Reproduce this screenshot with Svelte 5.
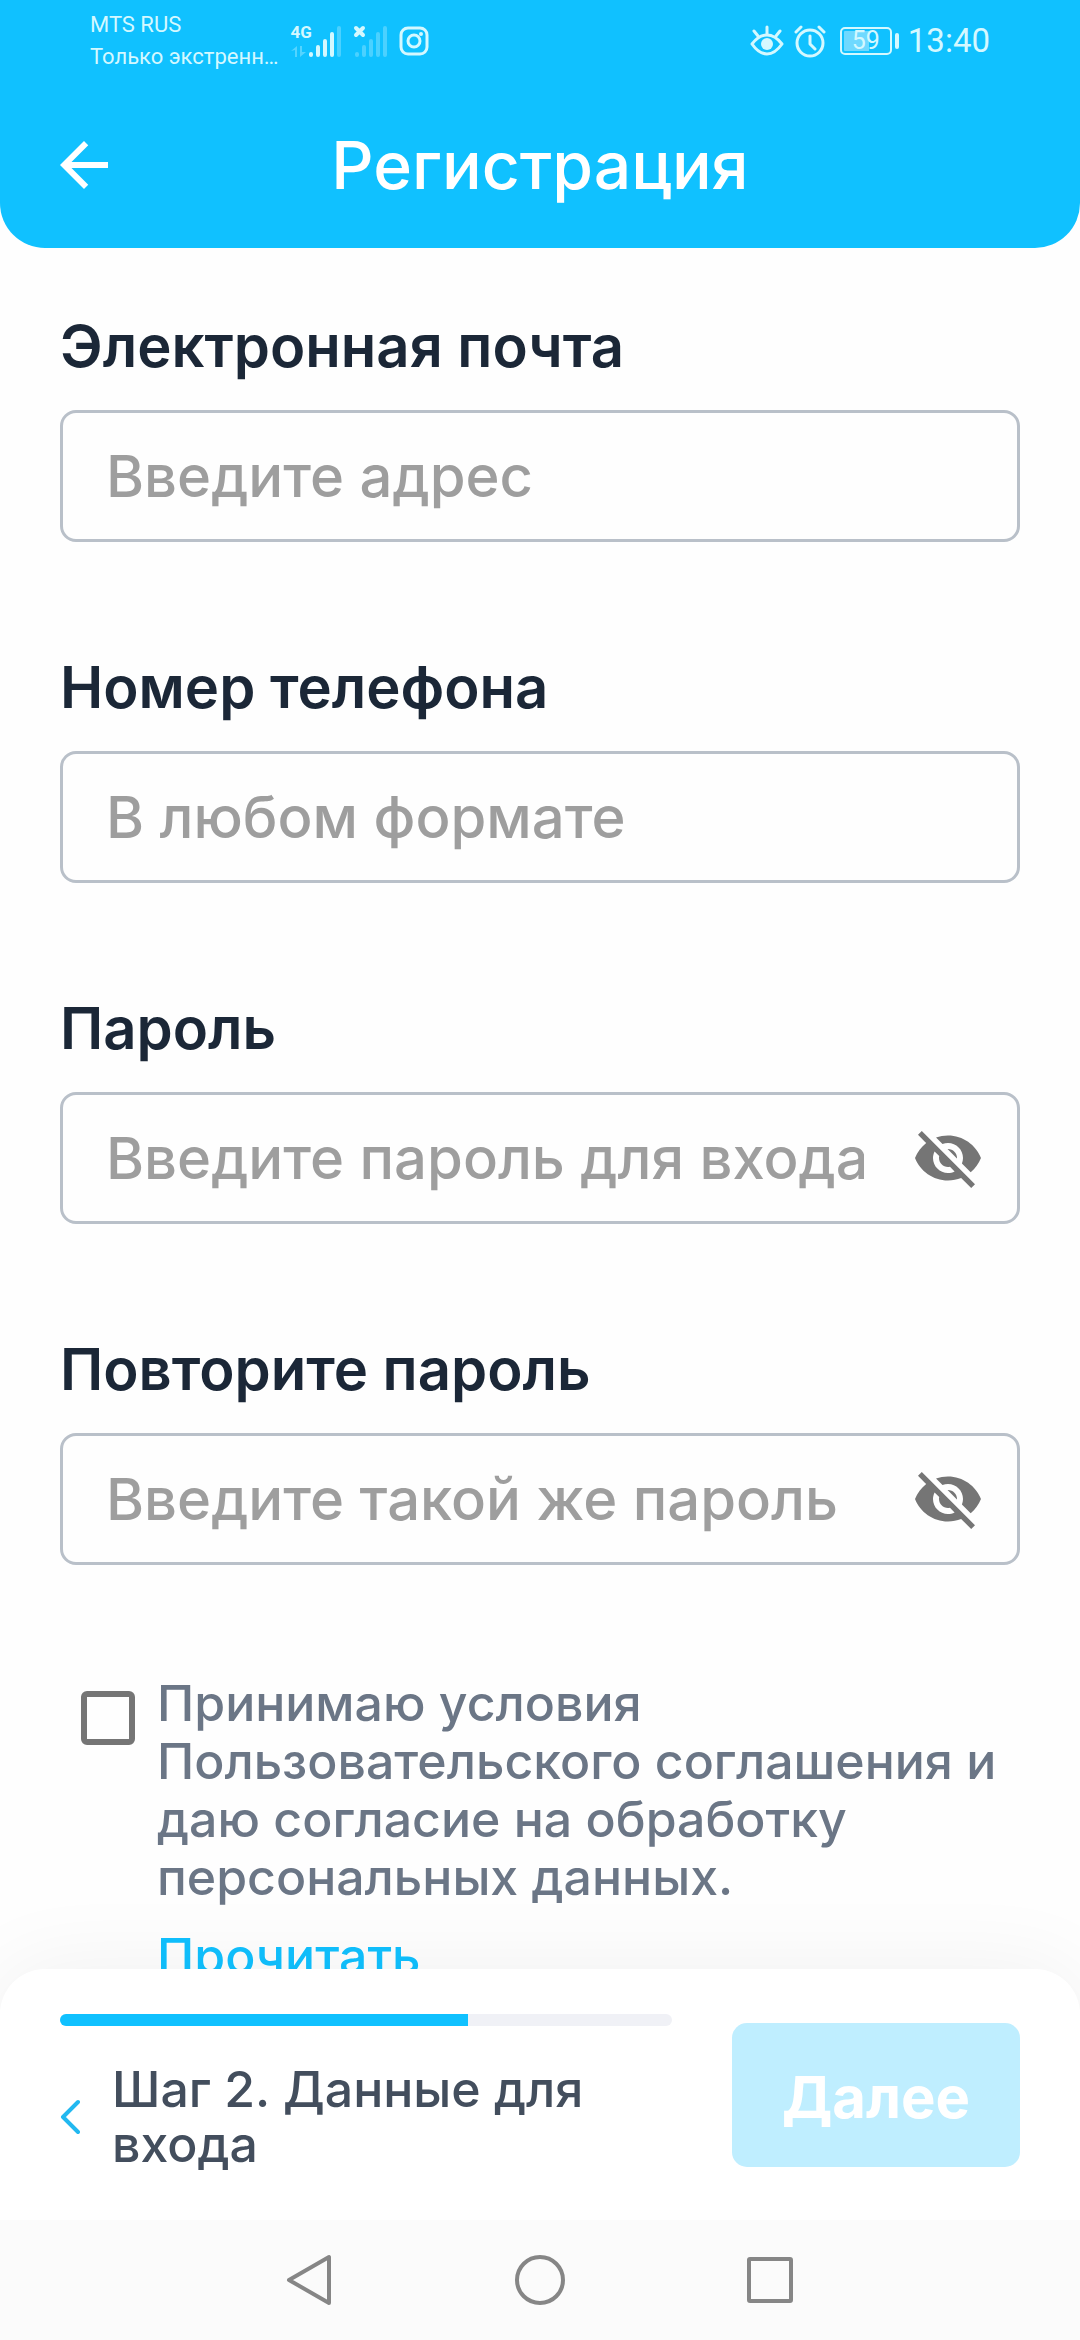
<script lang="ts">
  type Field = {
    id: string;
    label: string;
    placeholder: string;
    type: "email" | "tel" | "password";
  };

  const fields: Field[] = [
    { id: "email", label: "Электронная почта", placeholder: "Введите адрес", type: "email" },
    { id: "phone", label: "Номер телефона", placeholder: "В любом формате", type: "tel" },
    { id: "password", label: "Пароль", placeholder: "Введите пароль для входа", type: "password" },
    { id: "repeat", label: "Повторите пароль", placeholder: "Введите такой же пароль", type: "password" },
  ];

  let values = $state<Record<string, string>>({ email: "", phone: "", password: "", repeat: "" });
  let visible = $state<Record<string, boolean>>({});
  let accepted = $state(false);

  const step = 2;
  const stepCount = 3;
  const progress = (step / stepCount) * 100;

  const complete = $derived(accepted && fields.every((field) => values[field.id] !== ""));
</script>

<div class="screen">
  <header class="header">
    <div class="status">
      <div class="carrier">
        <span>MTS RUS</span>
        <span>Только экстренн…</span>
      </div>
      <div class="signals">
        <div class="network">
          <span class="generation">4G</span>
          <svg width="52" height="34" viewBox="0 0 52 34" fill="none" stroke="currentColor" stroke-width="4" stroke-linecap="round" aria-hidden="true">
            <path d="M0 27l6-5v11H4v-7zM9 22v11l6-5h-4v-6z" fill="currentColor" stroke="none" opacity="0.35" />
            <path d="M20 30v1M27 23v8M34 17v14M41 10v21" />
            <path d="M48 4v27" opacity="0.3" />
          </svg>
        </div>
        <svg width="36" height="34" viewBox="0 0 36 34" fill="none" stroke="currentColor" stroke-width="4" stroke-linecap="round" aria-hidden="true">
          <path d="M4 30v1M11 23v8M18 17v14M25 10v21M32 4v27" opacity="0.3" />
          <path d="M3 4l7 7M10 4l-7 7" />
        </svg>
        <svg width="30" height="30" viewBox="0 0 30 30" fill="none" stroke="currentColor" stroke-width="3" aria-hidden="true">
          <rect x="2" y="2" width="26" height="26" rx="7" />
          <circle cx="15" cy="15" r="6" />
          <circle cx="22" cy="8" r="2" fill="currentColor" stroke="none" />
        </svg>
      </div>
      <div class="system">
        <svg width="34" height="34" viewBox="0 0 34 34" fill="none" stroke="currentColor" stroke-width="3" stroke-linecap="round" stroke-linejoin="round" aria-hidden="true">
          <path d="M2 20Q9 11 17 11t15 9q-7 10-15 10T2 20z" />
          <path d="M17 10V3M8 12L4 7M26 12l4-5" />
          <circle cx="17" cy="20" r="6" fill="currentColor" stroke="none" />
        </svg>
        <svg width="32" height="34" viewBox="0 0 32 34" fill="none" stroke="currentColor" stroke-width="3" stroke-linecap="round" stroke-linejoin="round" aria-hidden="true">
          <circle cx="16" cy="19" r="13" />
          <path d="M16 12v8l5 5M2 8l5-5M30 8l-5-5" />
        </svg>
        <div class="battery"><span>59</span></div>
        <span class="clock">13:40</span>
      </div>
    </div>
    <div class="titlebar">
      <button class="icon-button" type="button" aria-label="Назад">
        <svg width="72" height="72" viewBox="0 0 24 24" fill="currentColor" aria-hidden="true">
          <path d="M20 11H7.83l5.59-5.59L12 4l-8 8 8 8 1.41-1.41L7.83 13H20v-2z" />
        </svg>
      </button>
      <h1>Регистрация</h1>
    </div>
  </header>

  <main class="content">
    {#each fields as field (field.id)}
      <div class="field">
        <label for={field.id}>{field.label}</label>
        <div class="control">
          <input
            id={field.id}
            type={field.type === "password" && visible[field.id] ? "text" : field.type}
            placeholder={field.placeholder}
            bind:value={values[field.id]}
          />
          {#if field.type === "password"}
            <button
              class="icon-button eye"
              type="button"
              aria-label="Показать пароль"
              aria-pressed={!!visible[field.id]}
              onclick={() => (visible[field.id] = !visible[field.id])}
            >
              <svg width="72" height="72" viewBox="0 0 24 24" fill="currentColor" aria-hidden="true">
                <path d="M12 7c2.76 0 5 2.24 5 5 0 .65-.13 1.26-.36 1.83l2.92 2.92c1.51-1.26 2.7-2.89 3.43-4.75-1.73-4.39-6-7.5-11-7.5-1.4 0-2.74.25-3.98.7l2.16 2.16C10.74 7.13 11.35 7 12 7zM2 4.27l2.28 2.28.46.46C3.08 8.3 1.78 10.02 1 12c1.73 4.39 6 7.5 11 7.5 1.55 0 3.03-.3 4.38-.84l.42.42L19.73 22 21 20.73 3.27 3 2 4.27zM7.53 9.8l1.55 1.55c-.05.21-.08.43-.08.65 0 1.66 1.34 3 3 3 .22 0 .44-.03.65-.08l1.55 1.55c-.67.33-1.41.53-2.2.53-2.76 0-5-2.24-5-5 0-.79.2-1.53.53-2.2zm4.31-.78l3.15 3.15.02-.16c0-1.66-1.34-3-3-3l-.17.01z" />
              </svg>
            </button>
          {/if}
        </div>
      </div>
    {/each}

    <div class="consent">
      <input id="consent" type="checkbox" bind:checked={accepted} />
      <div class="terms">
        <label for="consent">Принимаю условия Пользовательского соглашения и даю согласие на обработку персональных данных.</label>
        <a href="#terms">Прочитать</a>
      </div>
    </div>
  </main>

  <footer class="panel">
    <div class="progress">
      <div class="track" role="progressbar" aria-label="Шаг" aria-valuenow={step} aria-valuemin={0} aria-valuemax={stepCount}>
        <div class="bar" style={`width: ${progress}%`}></div>
      </div>
      <button class="step" type="button">
        <svg width="20" height="36" viewBox="0 0 20 36" fill="none" stroke="currentColor" stroke-width="4" stroke-linecap="round" stroke-linejoin="round" aria-hidden="true">
          <path d="M18 3L3 18l15 15" />
        </svg>
        <span>Шаг 2. Данные для входа</span>
      </button>
    </div>
    <button class="next" type="button" disabled={!complete}>Далее</button>
  </footer>

  <nav class="navbar" aria-label="Система">
    <button class="icon-button" type="button" aria-label="Назад">
      <svg width="54" height="54" viewBox="0 0 54 54" fill="none" stroke="currentColor" stroke-width="4" stroke-linejoin="round" aria-hidden="true">
        <path d="M46 4v46L6 27z" />
      </svg>
    </button>
    <button class="icon-button" type="button" aria-label="Домой">
      <svg width="54" height="54" viewBox="0 0 54 54" fill="none" stroke="currentColor" stroke-width="4" aria-hidden="true">
        <circle cx="27" cy="27" r="23" />
      </svg>
    </button>
    <button class="icon-button" type="button" aria-label="Недавние">
      <svg width="54" height="54" viewBox="0 0 54 54" fill="none" stroke="currentColor" stroke-width="4" stroke-linejoin="round" aria-hidden="true">
        <rect x="6" y="6" width="42" height="42" rx="1" />
      </svg>
    </button>
  </nav>
</div>

<style>
  :global(body) {
    margin: 0;
    background: #fefefe;
  }

  .screen {
    --brand: #10c1ff;
    display: flex;
    flex-direction: column;
    height: 100vh;
    font-family: Inter, "Open Sans", sans-serif;
    font-weight: 500;
    background: #fefefe;
  }

  button {
    padding: 0;
    border: 0;
    background: none;
    font-family: inherit;
    font-weight: inherit;
    cursor: pointer;
  }

  .icon-button {
    display: flex;
    color: inherit;
  }

  .header {
    flex: none;
    color: #fff;
    background: var(--brand);
    border-radius: 0 0 45px 45px;
  }

  .status {
    display: flex;
    align-items: center;
    height: 82px;
    padding: 0 90px;
    font-family: Roboto, sans-serif;
    font-weight: 400;
    color: #d4f8ff;
  }

  .carrier {
    display: flex;
    flex-direction: column;
    font-size: 22px;
    line-height: 32px;
  }

  .signals {
    display: flex;
    align-items: center;
    gap: 10px;
    margin-left: 12px;
  }

  .network {
    position: relative;
    display: flex;
  }

  .generation {
    position: absolute;
    top: 0;
    left: 0;
    font-size: 17px;
    font-weight: 700;
    line-height: 17px;
  }

  .system {
    display: flex;
    align-items: center;
    gap: 10px;
    margin-left: auto;
  }

  .battery {
    position: relative;
    box-sizing: border-box;
    width: 52px;
    height: 28px;
    margin: 0 6px 0 4px;
    padding: 2px;
    border: 2px solid currentColor;
    border-radius: 5px;
    background: linear-gradient(to right, #6fd9ff 56%, transparent 56%) content-box;
    font-size: 25px;
    line-height: 20px;
    text-align: center;
  }

  .battery::after {
    content: "";
    position: absolute;
    top: 4px;
    right: -9px;
    width: 4px;
    height: 16px;
    border-radius: 2px;
    background: currentColor;
  }

  .clock {
    font-size: 33px;
    line-height: 40px;
  }

  .titlebar {
    display: grid;
    grid-template-columns: 72px 1fr 72px;
    align-items: center;
    padding: 47px 48px;
  }

  h1 {
    margin: 0;
    font-size: 66px;
    font-weight: 500;
    line-height: 72px;
    text-align: center;
  }

  .content {
    flex: 1;
    min-height: 0;
    overflow-y: auto;
    scrollbar-width: none;
    padding: 62px 60px 0;
  }

  .field {
    margin-bottom: 109px;
  }

  .field label {
    display: block;
    margin-bottom: 28px;
    font-size: 58px;
    font-weight: 600;
    line-height: 72px;
    color: #1b2737;
  }

  .control {
    display: flex;
    align-items: center;
    box-sizing: border-box;
    height: 132px;
    padding: 0 33px 0 43px;
    border: 3px solid #b9c0c9;
    border-radius: 16px;
  }

  .control input {
    flex: 1;
    min-width: 0;
    height: 100%;
    padding: 0;
    border: 0;
    outline: 0;
    background: none;
    font-family: inherit;
    font-size: 58px;
    font-weight: 500;
    color: #1b2737;
  }

  .control input::placeholder {
    color: #9e9e9e;
    opacity: 1;
  }

  .eye {
    margin-left: 48px;
    color: #757575;
  }

  .consent {
    display: flex;
    align-items: flex-start;
    gap: 22px;
    padding-left: 21px;
  }

  .consent input {
    appearance: none;
    flex: none;
    width: 54px;
    height: 54px;
    margin: 17px 0 0;
    border: 6px solid #757575;
    border-radius: 6px;
  }

  .consent input:checked {
    background: var(--brand);
  }

  .terms {
    display: flex;
    flex-direction: column;
    align-items: flex-start;
    gap: 21px;
    font-size: 50px;
    line-height: 58px;
    color: #6b7686;
  }

  .terms label {
    margin-right: -8px;
  }

  .terms a {
    color: var(--brand);
    text-decoration: none;
  }

  .panel {
    position: relative;
    flex: none;
    display: flex;
    align-items: flex-start;
    gap: 60px;
    padding: 45px 60px 48px;
    background: #fff;
    border-radius: 45px 45px 0 0;
    box-shadow: 0 0 90px rgba(0, 0, 0, 0.06);
  }

  .progress {
    flex: 1;
  }

  .track {
    height: 12px;
    overflow: hidden;
    border-radius: 6px;
    background: #f0f1f6;
  }

  .bar {
    height: 100%;
    background: var(--brand);
  }

  .step {
    display: flex;
    align-items: center;
    gap: 32px;
    margin-top: 36px;
    font-size: 50px;
    line-height: 55px;
    text-align: left;
    color: #434e5d;
  }

  .step svg {
    flex: none;
    color: #22b8f0;
  }

  .next {
    width: 30%;
    height: 144px;
    margin-top: 9px;
    padding-top: 4px;
    border-radius: 15px;
    background: var(--brand);
    font-size: 58px;
    font-weight: 700;
    color: #fff;
  }

  .next:disabled {
    background: #bfeeff;
    cursor: default;
  }

  .navbar {
    position: relative;
    flex: none;
    display: flex;
    justify-content: center;
    gap: 176px;
    padding: 33px 0;
    background: #fbfbfb;
    color: #868686;
  }
</style>
